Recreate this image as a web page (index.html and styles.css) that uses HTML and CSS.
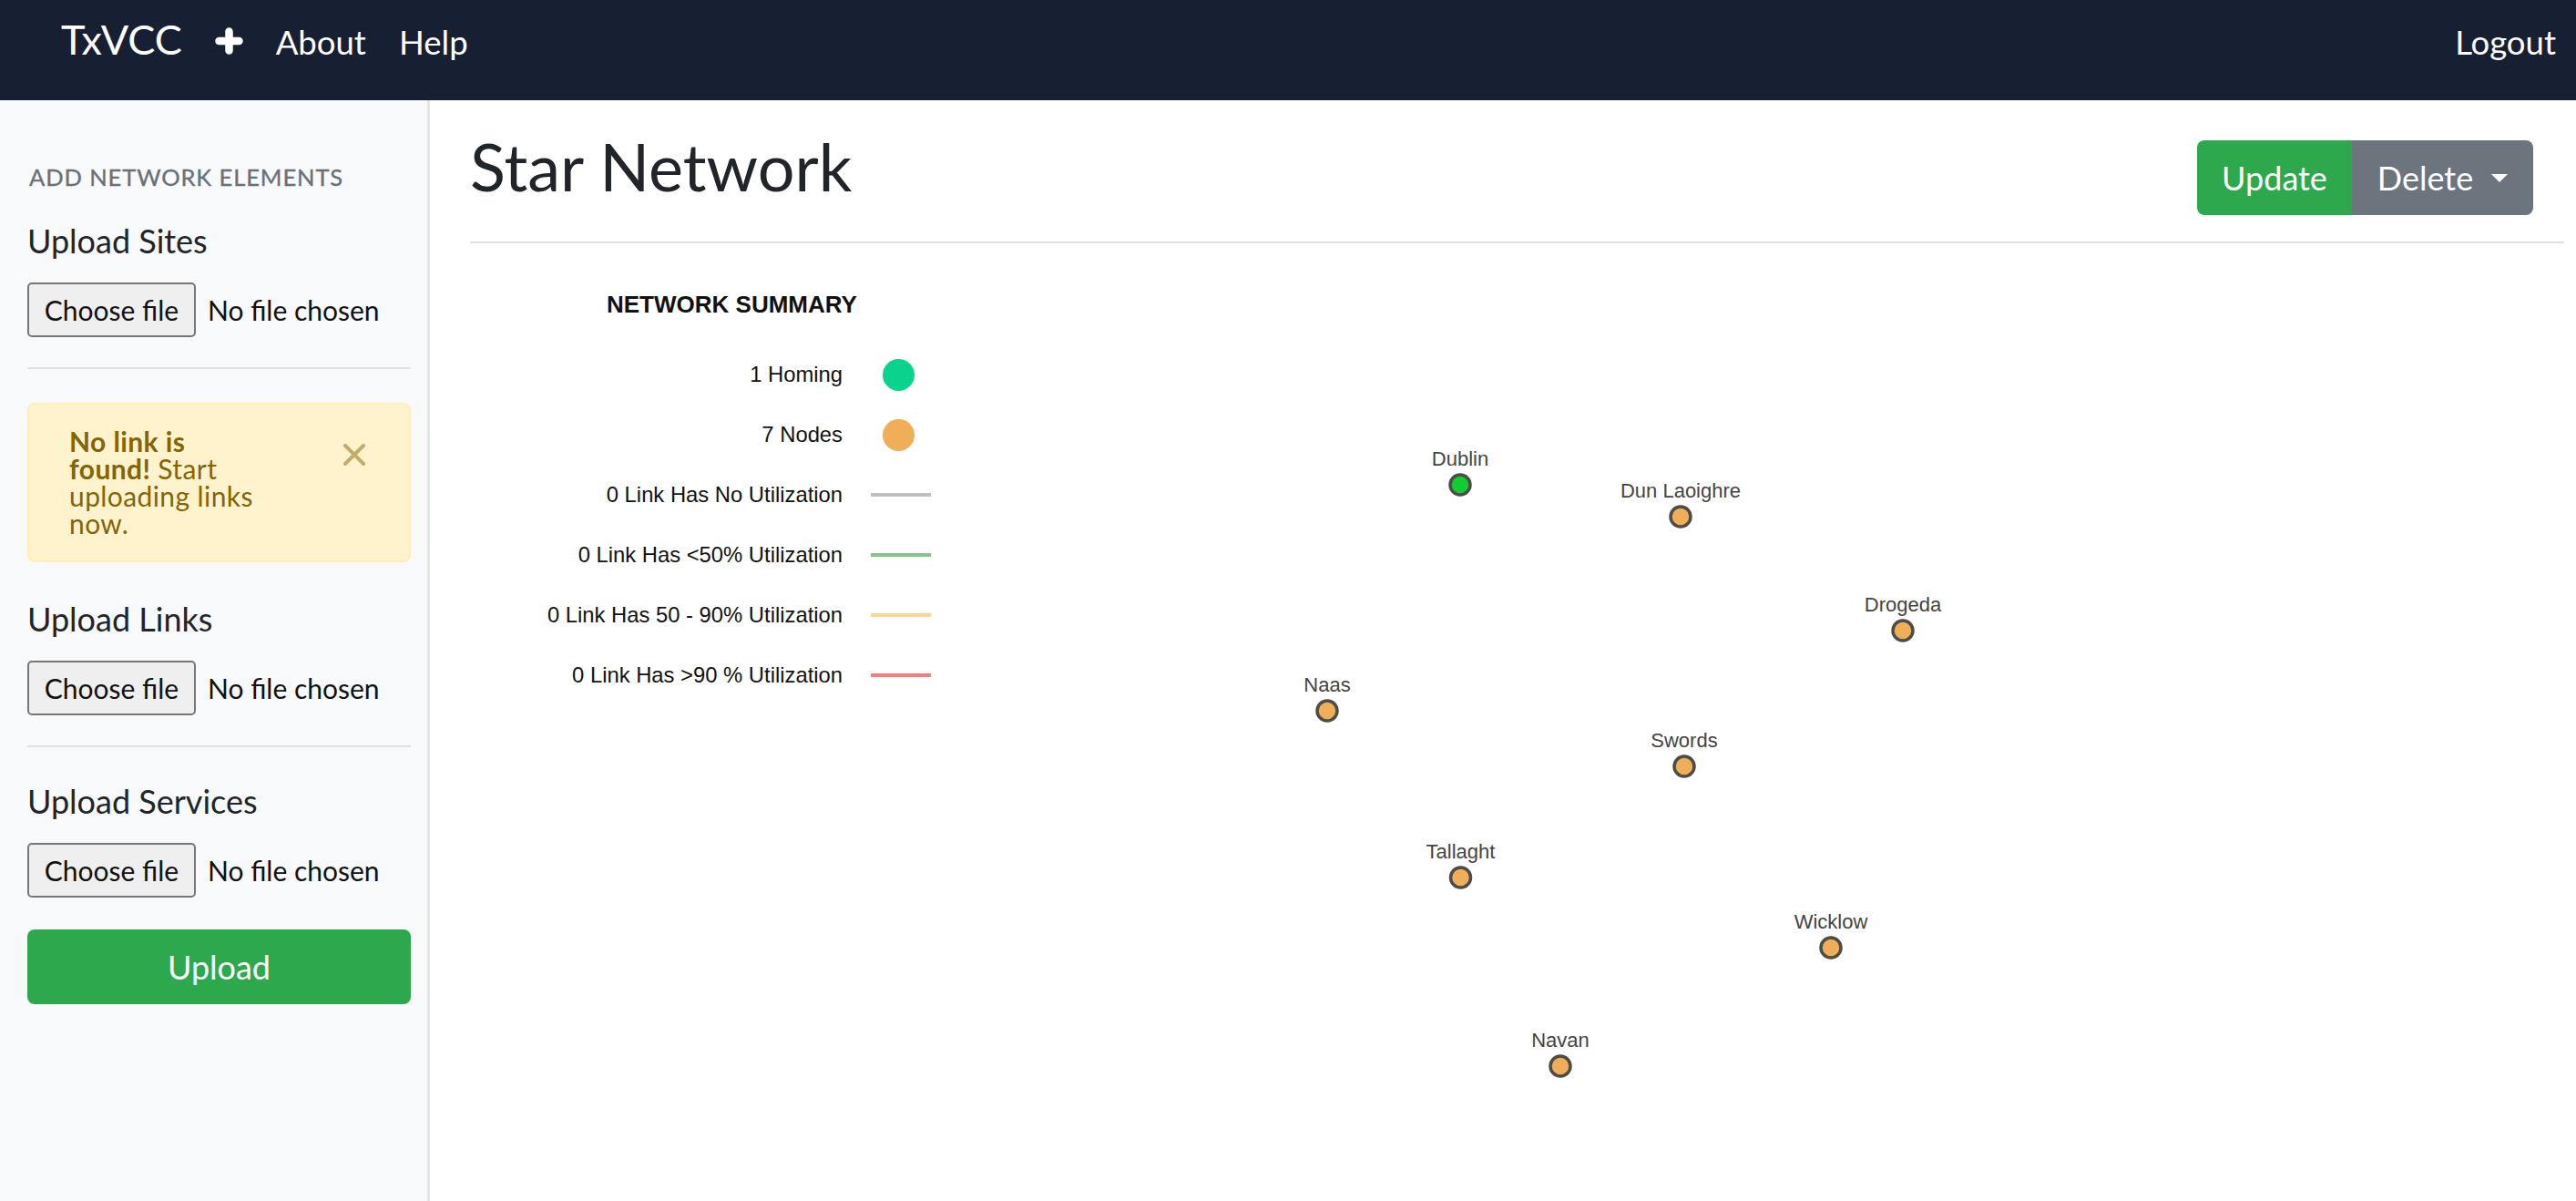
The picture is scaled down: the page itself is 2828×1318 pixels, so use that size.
FILE: index.html
```html
<!DOCTYPE html>
<html lang="en">
<head>
<meta charset="utf-8">
<title>TxVCC - Star Network</title>
<link rel="stylesheet" href="styles.css">
</head>
<body>
<nav class="navbar">
  <span class="brand">TxVCC</span>
  <span class="nav-icon">
    <svg width="31" height="30" viewBox="0 0 31 30"><path d="M15.5 4.5 V25.5 M4.5 15 H26.5" stroke="#fff" stroke-width="8.5" stroke-linecap="round" fill="none"/></svg>
  </span>
  <span class="nav-link">About</span>
  <span class="nav-link">Help</span>
  <span class="nav-link logout">Logout</span>
</nav>
<div class="layout">
  <aside class="sidebar">
    <div class="side-heading">Add Network Elements</div>
    <h5 class="upload-title">Upload Sites</h5>
    <div class="file-row"><span class="file-btn">Choose file</span><span class="file-name">No file chosen</span></div>
    <div class="divider"></div>
    <div class="alert">
      <div class="alert-text"><strong>No link is found!</strong> Start uploading links now.</div>
      <span class="alert-close"><svg width="26" height="26" viewBox="0 0 26 26"><path d="M3 3 L23 23 M23 3 L3 23" stroke="#c3ad6b" stroke-width="4" stroke-linecap="round" fill="none"/></svg></span>
    </div>
    <h5 class="upload-title links-title">Upload Links</h5>
    <div class="file-row"><span class="file-btn">Choose file</span><span class="file-name">No file chosen</span></div>
    <div class="divider"></div>
    <h5 class="upload-title services-title">Upload Services</h5>
    <div class="file-row"><span class="file-btn">Choose file</span><span class="file-name">No file chosen</span></div>
    <div class="upload-btn">Upload</div>
  </aside>
  <main class="main">
    <div class="title-row">
      <h1 class="page-title">Star Network</h1>
      <div class="btn-group">
        <span class="btn btn-update">Update</span>
        <span class="btn btn-delete">Delete <span class="caret"></span></span>
      </div>
    </div>
    <div class="graph">
      <div class="legend">
        <div class="legend-title">NETWORK SUMMARY</div>
        <div class="legend-rows">
          <span class="legend-label">1 Homing</span><span class="legend-mark"><span class="dot dot-homing"></span></span>
          <span class="legend-label">7 Nodes</span><span class="legend-mark"><span class="dot dot-node"></span></span>
          <span class="legend-label">0 Link Has No Utilization</span><span class="legend-mark"><span class="line line-none"></span></span>
          <span class="legend-label">0 Link Has &lt;50% Utilization</span><span class="legend-mark"><span class="line line-low"></span></span>
          <span class="legend-label">0 Link Has 50 - 90% Utilization</span><span class="legend-mark"><span class="line line-mid"></span></span>
          <span class="legend-label">0 Link Has &gt;90 % Utilization</span><span class="legend-mark"><span class="line line-high"></span></span>
        </div>
      </div>
      <svg class="canvas" width="1752" height="1051" viewBox="0 0 1752 1051">
        <g class="node-labels">
          <text x="545" y="244">Dublin</text>
          <text x="787" y="279">Dun Laoighre</text>
          <text x="1031" y="404">Drogeda</text>
          <text x="399" y="492">Naas</text>
          <text x="791" y="553">Swords</text>
          <text x="545.5" y="675">Tallaght</text>
          <text x="952" y="752">Wicklow</text>
          <text x="655" y="882">Navan</text>
        </g>
        <g class="nodes">
          <circle class="homing" cx="545" cy="265" r="11"/>
          <circle cx="787" cy="300" r="11"/>
          <circle cx="1031" cy="425" r="11"/>
          <circle cx="399" cy="513" r="11"/>
          <circle cx="791" cy="574" r="11"/>
          <circle cx="545.5" cy="696" r="11"/>
          <circle cx="952" cy="773" r="11"/>
          <circle cx="655" cy="903" r="11"/>
        </g>
      </svg>
    </div>
  </main>
</div>
</body>
</html>
```
FILE: styles.css
```css
html, body {
  margin: 0;
  padding: 0;
  height: 100%;
  overflow: hidden;
}
body {
  font-family: Lato, "Open Sans", "Liberation Sans", sans-serif;
  color: #212529;
  display: flex;
  flex-direction: column;
  background: #fff;
}

/* Navbar */
.navbar {
  height: 110px;
  box-sizing: border-box;
  background: #171f32;
  color: #fff;
  display: flex;
  align-items: baseline;
  padding: 16px 22px 0 67px;
  flex-shrink: 0;
}
.brand {
  font-size: 45px;
  line-height: 1.2;
  margin-right: 36px;
}
.nav-icon {
  margin-right: 36px;
  display: inline-flex;
}
.nav-icon svg { display: block; }
.nav-link {
  font-size: 36.5px;
  line-height: 1.2;
  margin-right: 36px;
}
.nav-link.logout {
  margin-left: auto;
  margin-right: 0;
}

/* Layout */
.layout {
  flex: 1;
  display: flex;
  min-height: 0;
}
.sidebar {
  width: 472px;
  flex-shrink: 0;
  box-sizing: border-box;
  background: #f8f9fa;
  border-right: 3px solid #e3e5e8;
  padding: 69px 18px 0 30px;
}
.side-heading {
  font-size: 25.5px;
  line-height: 30px;
  text-transform: uppercase;
  color: #68717a;
  letter-spacing: 0.9px;
  padding-left: 2px;
  -webkit-text-stroke: 0.35px #68717a;
}
.upload-title {
  margin: 33px 0 0 0;
  font-size: 36px;
  font-weight: 400;
  line-height: 44px;
  color: #212529;
}
.links-title { margin-top: 40px; }
.services-title { margin-top: 37px; }
.file-row {
  margin-top: 24px;
  height: 60px;
  display: flex;
  align-items: center;
  font-size: 30px;
  color: #111;
}
.file-btn {
  box-sizing: border-box;
  width: 185px;
  height: 60px;
  display: flex;
  align-items: center;
  justify-content: center;
  background: #efefef;
  border: 2px solid #777;
  border-radius: 5px;
  color: #111;
}
.file-name {
  margin-left: 13px;
}
.divider {
  margin-top: 33px;
  height: 2px;
  background: #dee2e6;
}
.alert {
  margin-top: 37px;
  box-sizing: border-box;
  height: 175px;
  background: #fff3cd;
  border: 2px solid #ffeeba;
  border-radius: 8px;
  padding: 25px 0 0 44px;
  display: flex;
  align-items: flex-start;
  color: #856404;
}
.alert-text {
  width: 215px;
  flex-shrink: 0;
  font-size: 30px;
  line-height: 30px;
  letter-spacing: 0.4px;
}
.alert-text strong { font-weight: 700; }
.alert-close {
  margin-left: 85px;
  margin-top: 17px;
  display: inline-flex;
}
.alert-close svg { display: block; }
.upload-btn {
  margin-top: 35px;
  height: 82px;
  background: #2ea84d;
  border-radius: 8px;
  color: #fff;
  font-size: 36px;
  display: flex;
  align-items: center;
  justify-content: center;
}

/* Main */
.main {
  flex: 1;
  min-width: 0;
  padding: 0 13px 0 44px;
  display: flex;
  flex-direction: column;
}
.title-row {
  display: flex;
  justify-content: space-between;
  align-items: flex-start;
  padding: 29px 0 29px 0;
  border-bottom: 2px solid #dee2e6;
}
.page-title {
  margin: 0;
  font-size: 72px;
  font-weight: 400;
  line-height: 86px;
  color: #212529;
}
.btn-group {
  display: flex;
  margin-top: 15px;
  margin-right: 34px;
}
.btn {
  height: 82px;
  display: flex;
  align-items: center;
  justify-content: center;
  color: #fff;
  font-size: 36px;
  box-sizing: border-box;
}
.btn-update {
  width: 170px;
  background: #2ea84d;
  border-radius: 8px 0 0 8px;
}
.btn-delete {
  width: 199px;
  background: #6c757d;
  border-radius: 0 8px 8px 0;
}
.caret {
  display: inline-block;
  margin-left: 20px;
  width: 0;
  height: 0;
  border-left: 9.5px solid transparent;
  border-right: 9.5px solid transparent;
  border-top: 9.5px solid #fff;
}

/* Graph */
.graph {
  flex: 1;
  display: flex;
  align-items: flex-start;
}
.legend {
  width: 542px;
  flex-shrink: 0;
  padding-top: 34px;
  font-family: "Liberation Sans", Arial, sans-serif;
  color: #111;
}
.legend-title {
  height: 66px;
  line-height: 66px;
  padding-left: 150px;
  font-weight: 700;
  font-size: 26px;
}
.legend-rows {
  margin-top: 11px;
  display: grid;
  grid-template-columns: 409px 66px;
  grid-auto-rows: 66px;
  column-gap: 31px;
  align-items: center;
}
.legend-label {
  text-align: right;
  font-size: 23.8px;
}
.legend-mark {
  display: flex;
  align-items: center;
}
.dot {
  width: 35px;
  height: 35px;
  border-radius: 50%;
  margin-left: 13px;
}
.dot-homing { background: #0ad38d; }
.dot-node { background: #efae57; }
.line {
  width: 66px;
  height: 4px;
}
.line-none { background: #bfbfbf; }
.line-low { background: #87c48b; }
.line-mid { background: #ffd591; }
.line-high { background: #ff7b7b; }

.canvas {
  flex-shrink: 0;
  display: block;
}
.node-labels text {
  font-family: "Liberation Sans", Arial, sans-serif;
  font-size: 22px;
  fill: #444;
  text-anchor: middle;
}
.nodes circle {
  fill: #efae57;
  stroke: #4d4c46;
  stroke-width: 3.5;
}
.nodes circle.homing {
  fill: #12cc33;
}
```
